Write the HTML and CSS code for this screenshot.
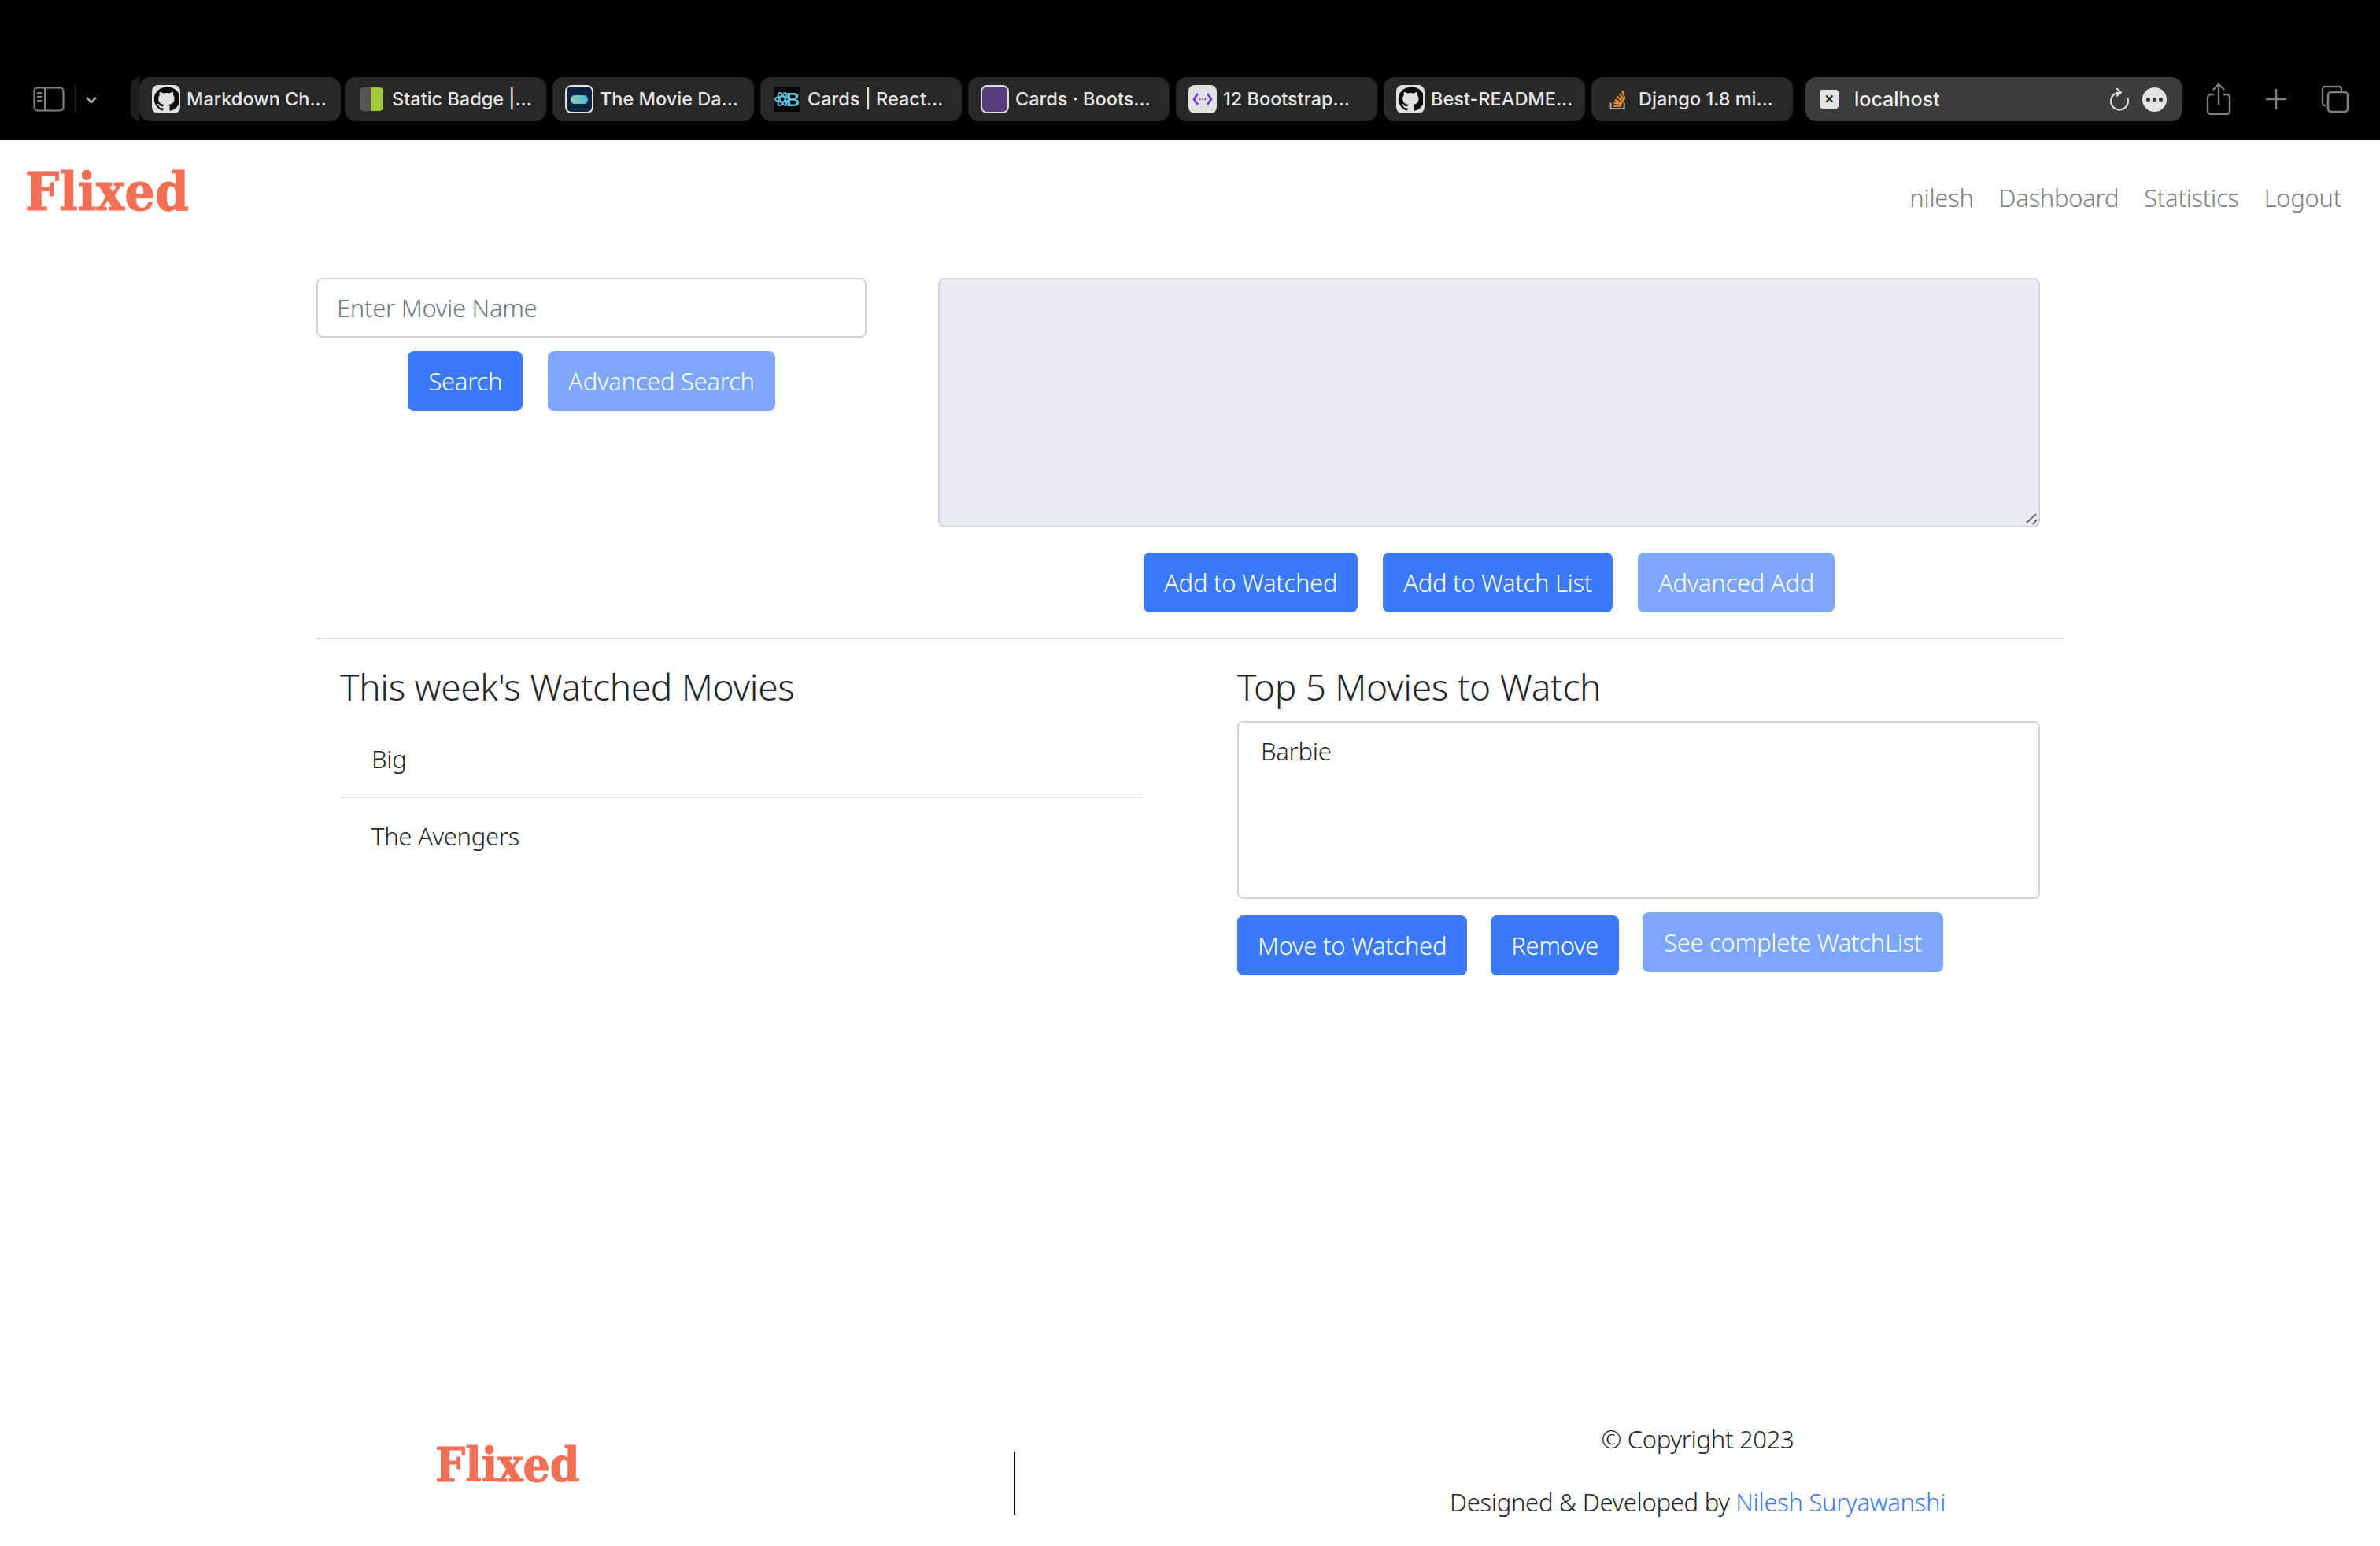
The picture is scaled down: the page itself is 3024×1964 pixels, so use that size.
FILE: index.html
```html
<!DOCTYPE html>
<html lang="en">
<head>
<meta charset="utf-8">
<title>Flixed</title>
<link rel="stylesheet" href="styles.css">
</head>
<body>
<header class="chrome">
  <div class="side">
    <svg class="ic-side" viewBox="0 0 40 32" width="40" height="32"><rect x="1.5" y="1.500" width="37" height="29" rx="4" fill="none" stroke="#808080" stroke-width="2.200"/><path d="M15 2v28M5 8h6M5 13h6M5 18h6" stroke="#808080" stroke-width="2" fill="none"/></svg>
    <span class="side-div"></span>
    <svg class="ic-chev" viewBox="0 0 16 10" width="16" height="10"><path d="M2 2l6 6 6-6" fill="none" stroke="#a8a8a8" stroke-width="2.600"/></svg>
  </div>
  <div class="tabs">
    <div class="tab"><span class="fav fav-gh"><svg viewBox="0 0 24 24" width="32" height="32"><path d="M12 .5a11.500 11.500 0 0 0-3.600 22.400c.6.100.8-.2.8-.5v-2.100c-3.200.7-3.900-1.400-3.900-1.400-.5-1.300-1.300-1.700-1.300-1.700-1-.7.100-.7.100-.7 1.200.1 1.800 1.200 1.800 1.200 1 1.800 2.700 1.300 3.400 1 .1-.8.400-1.300.7-1.600-2.600-.3-5.300-1.300-5.300-5.700 0-1.300.5-2.300 1.200-3.100-.1-.3-.5-1.500.1-3.100 0 0 1-.3 3.300 1.200a11 11 0 0 1 6 0c2.300-1.500 3.300-1.200 3.300-1.200.6 1.600.2 2.800.1 3.100.8.800 1.200 1.800 1.200 3.100 0 4.400-2.700 5.400-5.300 5.700.4.400.8 1.100.8 2.200v3.300c0 .3.2.6.8.5A11.500 11.500 0 0 0 12 .5z" fill="#0c0c0c"/></svg></span><span class="tab-t">Markdown Ch...</span></div>
    <div class="tab"><span class="fav fav-badge"></span><span class="tab-t">Static Badge |...</span></div>
    <div class="tab"><span class="fav fav-tmdb"><i></i></span><span class="tab-t">The Movie Da...</span></div>
    <div class="tab"><span class="fav fav-rb"><svg viewBox="0 0 32 32" width="32" height="32"><g fill="none" stroke="#5fc3dc" stroke-width="2"><ellipse cx="10" cy="16" rx="9" ry="3.500"/><ellipse cx="10" cy="16" rx="9" ry="3.500" transform="rotate(60 10 16)"/><ellipse cx="10" cy="16" rx="9" ry="3.500" transform="rotate(120 10 16)"/></g><text class="rb-b" x="15" y="25">B</text></svg></span><span class="tab-t">Cards | React...</span></div>
    <div class="tab"><span class="fav fav-bs"></span><span class="tab-t">Cards · Boots...</span></div>
    <div class="tab"><span class="fav fav-dots"><svg viewBox="0 0 34 34" width="34" height="34"><path d="M11 10l-5 7 5 7M23 10l5 7-5 7" fill="none" stroke="#6a2cf0" stroke-width="2.600"/><path d="M13 17h1.500M16.300 17h1.500M19.500 17h1.500" stroke="#6a2cf0" stroke-width="2.400"/></svg></span><span class="tab-t">12 Bootstrap...</span></div>
    <div class="tab"><span class="fav fav-gh"><svg viewBox="0 0 24 24" width="32" height="32"><path d="M12 .5a11.500 11.500 0 0 0-3.600 22.400c.6.100.8-.2.8-.5v-2.100c-3.200.7-3.900-1.400-3.900-1.400-.5-1.300-1.300-1.700-1.300-1.700-1-.7.100-.7.100-.7 1.200.1 1.800 1.200 1.800 1.200 1 1.800 2.700 1.300 3.400 1 .1-.8.400-1.300.7-1.600-2.600-.3-5.300-1.300-5.300-5.700 0-1.300.5-2.300 1.200-3.100-.1-.3-.5-1.500.1-3.100 0 0 1-.3 3.300 1.200a11 11 0 0 1 6 0c2.300-1.500 3.300-1.200 3.300-1.200.6 1.600.2 2.800.1 3.100.8.800 1.200 1.800 1.200 3.100 0 4.400-2.700 5.400-5.300 5.700.4.400.8 1.100.8 2.200v3.300c0 .3.2.6.8.5A11.500 11.500 0 0 0 12 .5z" fill="#0c0c0c"/></svg></span><span class="tab-t">Best-README...</span></div>
    <div class="tab"><span class="fav fav-so"><svg viewBox="0 0 28 34" width="24" height="30"><path d="M3 22v9h20v-9" fill="none" stroke="#a8a8a8" stroke-width="2.400"/><path d="M7 27h12M7.500 22.500l12 2M9 18l11 5M12 13l9.500 8M16 9l7 10M20 4l4 13" stroke="#f08c2e" stroke-width="2.600" fill="none"/></svg></span><span class="tab-t">Django 1.8 mi...</span></div>
    <div class="addr">
      <span class="addr-x">✕</span><span class="addr-t">localhost</span>
      <svg class="ic-reload" viewBox="0 0 26 30" width="26" height="30"><path d="M13 6.500a11 11 0 1 0 11 11c0-1.500-.3-3-.9-4.300" fill="none" stroke="#e4e4e4" stroke-width="2"/><path d="M9 1l6 5.500-6 5" fill="none" stroke="#e4e4e4" stroke-width="2"/></svg>
      <span class="addr-more"><i></i><i></i><i></i></span>
    </div>
  </div>
  <div class="actions">
    <svg viewBox="0 0 32 40" width="32" height="40"><path d="M10 14H6a4 4 0 0 0-4 4v17a4 4 0 0 0 4 4h20a4 4 0 0 0 4-4V18a4 4 0 0 0-4-4h-4M16 27V2M9 8l7-7 7 7" fill="none" stroke="#808080" stroke-width="2.400"/></svg>
    <svg viewBox="0 0 30 30" width="30" height="30"><path d="M15 2v26M2 15h26" stroke="#808080" stroke-width="2.600" fill="none"/></svg>
    <svg viewBox="0 0 36 36" width="36" height="36"><path d="M6 26H5a3 3 0 0 1-3-3V5a3 3 0 0 1 3-3h18a3 3 0 0 1 3 3v2" fill="none" stroke="#808080" stroke-width="2.400"/><rect x="9" y="9" width="25" height="25" rx="4" fill="none" stroke="#808080" stroke-width="2.600"/></svg>
  </div>
</header>

<nav class="nav">
  <a class="brand">Flixed</a>
  <ul class="nav-links">
    <li>nilesh</li><li>Dashboard</li><li>Statistics</li><li>Logout</li>
  </ul>
</nav>

<main class="page">
  <section class="top">
    <div class="search">
      <input class="field" type="text" placeholder="Enter Movie Name">
      <div class="row-center">
        <button class="btn">Search</button>
        <button class="btn off">Advanced Search</button>
      </div>
    </div>
    <div class="add">
      <div class="area-wrap">
        <textarea class="area" disabled></textarea>
        <svg class="grip" viewBox="0 0 20 20" width="20" height="20"><path d="M5 16L17 5M13 18l5-6" stroke="#666" stroke-width="2" fill="none"/></svg>
      </div>
      <div class="row-center">
        <button class="btn">Add to Watched</button>
        <button class="btn">Add to Watch List</button>
        <button class="btn off">Advanced Add</button>
      </div>
    </div>
  </section>
  <hr class="rule">
  <section class="lists">
    <div class="watched">
      <h3 class="title">This week's Watched Movies</h3>
      <ul class="movies">
        <li>Big</li>
        <li>The Avengers</li>
      </ul>
    </div>
    <div class="towatch">
      <h3 class="title">Top 5 Movies to Watch</h3>
      <div class="box">Barbie</div>
      <div class="row-left">
        <button class="btn">Move to Watched</button>
        <button class="btn">Remove</button>
        <button class="btn off up">See complete WatchList</button>
      </div>
    </div>
  </section>
</main>

<footer class="foot">
  <div class="foot-brand"><span class="brand small">Flixed</span></div>
  <div class="foot-line"></div>
  <div class="foot-text">
    <p>© Copyright 2023</p>
    <p>Designed &amp; Developed by <a class="link">Nilesh Suryawanshi</a></p>
  </div>
</footer>
</body>
</html>
```
FILE: styles.css
```css
* { box-sizing: border-box; }
html, body { margin: 0; padding: 0; }
body {
  width: 3024px; height: 1964px; overflow: hidden; background: #fff; color: #212529;
  font-family: "Noto Sans", sans-serif; font-size: 31px; letter-spacing: -.3px; line-height: 48px; font-weight: 300;
  display: flex; flex-direction: column;
}
.chrome { height: 178px; background: #000; display: flex; align-items: flex-end; padding: 0 0 24px 42px; flex: none; letter-spacing: 0; }
.side { width: 124px; height: 56px; display: flex; align-items: center; flex: none; }
.side-div { width: 2px; height: 36px; background: #222; margin: 0 11px 0 13px; }
.ic-chev { margin-top: 1px; }
.tabs { display: flex; gap: 8px; height: 56px; flex: none; border-left: 11px solid #1f1f1f; border-radius: 12px 0 0 12px; }
.tab { width: 256px; height: 56px; background: #282828; border-radius: 14px; display: flex; align-items: center; padding-left: 16px; gap: 8px; color: #e6e6e6; font: 500 23.5px/56px Inter, sans-serif; flex: none; white-space: nowrap; }
.tab:first-child { margin-right: -3px; }
.fav { width: 36px; height: 36px; border-radius: 8px; display: flex; align-items: center; justify-content: center; flex: none; overflow: hidden; }
.fav-gh { background: #e2e2e2; }
.fav-badge { background: linear-gradient(90deg, #565656 0 50%, #a2c93a 50%); border-radius: 5px; width: 30px; height: 30px; margin: 0 3px; }
.fav-tmdb { background: #0d2440; border: 2px solid #e2e2e2; }
.fav-tmdb i { width: 22px; height: 11px; border-radius: 6px; background: linear-gradient(90deg, #8fd0b0, #4fb8dc); }
.fav-rb { background: #000; border-radius: 0; width: 32px; height: 32px; margin: 0 2px; }
.rb-b { fill: #5fc3dc; font: 700 24px "Liberation Sans", sans-serif; }
.fav-bs { background: #563d7c; border: 2px solid #ddd; }
.fav-dots { background: #e2e2e2; }
.addr { width: 479px; height: 56px; margin-left: 8px; background: #3c3c3c; border-radius: 14px; display: flex; align-items: center; padding: 0 20px 0 18px; color: #f4f4f4; font: 500 25px/56px Inter, sans-serif; flex: none; }
.addr-x { width: 24px; height: 24px; background: #e2e2e2; border-radius: 4px; color: #222; font: 700 15px/24px "Liberation Sans", sans-serif; text-align: center; flex: none; }
.addr-t { margin-left: 20px; flex: 1; }
.ic-reload { margin-right: 16px; }
.addr-more { width: 31px; height: 31px; border-radius: 50%; background: #e2e2e2; display: flex; align-items: center; justify-content: center; gap: 3px; }
.addr-more i { width: 5px; height: 5px; border-radius: 50%; background: #333; }
.actions { display: flex; align-items: center; height: 56px; margin-left: 30px; gap: 42px; }

.nav { height: 175px; flex: none; display: flex; justify-content: space-between; padding: 26px 49px 0 32px; }
.brand { color: #f26f56; font: 700 68px/78px "DejaVu Serif Condensed", "DejaVu Serif", serif; font-stretch: condensed; letter-spacing: 0; display: block; -webkit-text-stroke: 1px #f26f56; }
.brand.small { font-size: 60px; line-height: 70px; }
.nav-links { list-style: none; margin: 23px 0 0; padding: 0; display: flex; gap: 32px; color: #7d7d7d; }

.page { width: 2222px; margin-left: 402px; flex: none; }
.top { display: flex; height: 425px; }
.search { width: 699px; margin-right: 91px; }
.field { display: block; width: 100%; height: 76px; border: 2px solid #ced4da; border-radius: 8px; padding: 0 24px; font: 300 31px "Noto Sans", sans-serif; letter-spacing: -.3px; color: #212529; }
.field::placeholder { color: #6c757d; opacity: 1; }
.add { width: 1400px; }
.area-wrap { position: relative; height: 317px; }
.area { display: block; width: 100%; height: 317px; background: #e9ebef; border: 2px solid #ced4da; border-radius: 8px; resize: none; }
.grip { position: absolute; right: 2px; bottom: 2px; }
.row-center { display: flex; justify-content: center; gap: 32px; margin-top: 17px; }
.add .row-center { margin-top: 32px; }
.btn { height: 76px; padding: 0 26px; border: 0; border-radius: 8px; background: #3a7af8; color: #fff; font: 300 31px "Noto Sans", sans-serif; letter-spacing: -.3px; white-space: nowrap; }
.btn.off { background: #7ca7f9; }
.btn.up { margin-top: -4px; padding: 0 27px; }
.rule { border: 0; border-top: 2px solid #dfe0e1; margin: 32px 0 0; }
.lists { display: flex; padding: 0 0 0 30px; margin-top: 30px; }
.watched { width: 1140px; }
.towatch { width: 1020px; }
.title { margin: 0 0 14px; font-size: 46px; line-height: 60px; font-weight: 300; }
.movies { list-style: none; margin: 0; padding: 0; width: 1020px; }
.movies li { padding: 24px 40px; height: 96px; line-height: 48px; }
.movies li + li { border-top: 2px solid #dfe0e1; }
.box { width: 1020px; height: 226px; border: 2px solid #ced4da; border-radius: 8px; padding: 12px 28px; }
.row-left { display: flex; gap: 30px; margin-top: 21px; }
.foot { margin-top: auto; height: 160px; flex: none; display: flex; align-items: flex-start; }
.foot-brand { width: 1288px; padding: 22px 0 0 553px; }
.foot-line { width: 2px; height: 80px; margin-top: 40px; background: #000; flex: none; }
.foot-text { flex: 1; text-align: center; }
.foot-text p { margin: 0 0 32px; }
.link { color: #3a7af8; }
```
